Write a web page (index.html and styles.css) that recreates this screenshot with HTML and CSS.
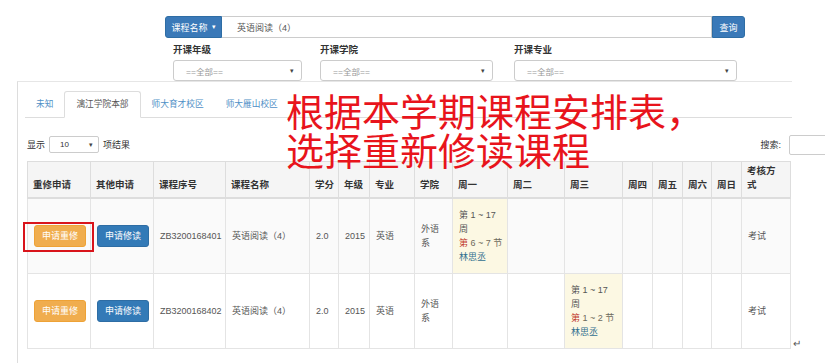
FILE: index.html
```html
<!DOCTYPE html>
<html>
<head>
<meta charset="utf-8">
<link rel="stylesheet" href="styles.css">
</head>
<body>
<div class="page">
  <div class="searchbar">
    <div class="sb-btn">课程名称 <span class="caret">▾</span></div>
    <div class="sb-input">英语阅读（4）</div>
    <div class="sb-go">查询</div>
  </div>
  <div class="filters">
    <div class="fgroup">
      <div class="flabel">开课年级</div>
      <div class="fselect w1"><span>==全部==</span><span class="arr">▾</span></div>
    </div>
    <div class="fgroup">
      <div class="flabel">开课学院</div>
      <div class="fselect w2"><span>==全部==</span><span class="arr">▾</span></div>
    </div>
    <div class="fgroup">
      <div class="flabel">开课专业</div>
      <div class="fselect w3"><span>==全部==</span><span class="arr">▾</span></div>
    </div>
  </div>
  <div class="panel">
    <ul class="tabs">
      <li class="tab">未知</li>
      <li class="tab active">漓江学院本部</li>
      <li class="tab">师大育才校区</li>
      <li class="tab">师大雁山校区</li>
    </ul>
    <div class="dt-top">
      <div class="len">显示 <span class="lensel"><span>10</span><span class="arr">▾</span></span> 项结果</div>
      <div class="srch">搜索:</div>
      <div class="srch-input"></div>
    </div>
    <table class="grid">
      <colgroup>
        <col style="width:63px"><col style="width:63px"><col style="width:72px"><col style="width:84px">
        <col style="width:29px"><col style="width:31px"><col style="width:45px"><col style="width:38px">
        <col style="width:55px"><col style="width:57px"><col style="width:58px"><col style="width:30px">
        <col style="width:30px"><col style="width:29px"><col style="width:30px"><col style="width:49px">
      </colgroup>
      <thead>
        <tr>
          <th>重修申请</th><th>其他申请</th><th>课程序号</th><th>课程名称</th><th>学分</th><th>年级</th><th>专业</th><th>学院</th>
          <th>周一</th><th>周二</th><th>周三</th><th>周四</th><th>周五</th><th>周六</th><th>周日</th><th>考核方<br>式</th>
        </tr>
      </thead>
      <tbody>
        <tr class="odd">
          <td><span class="mark"><span class="btn orange">申请重修</span></span></td>
          <td><span class="btn blue">申请修读</span></td>
          <td>ZB3200168401</td>
          <td>英语阅读（4）</td>
          <td>2.0</td>
          <td>2015</td>
          <td>英语</td>
          <td>外语系</td>
          <td class="sched"><div>第 1 ~ 17 周</div><div class="nw"><span class="red">第</span> 6 ~ 7 节</div><div class="teacher">林思丞</div></td>
          <td></td><td></td><td></td><td></td><td></td><td></td>
          <td>考试</td>
        </tr>
        <tr>
          <td><span class="btn orange">申请重修</span></td>
          <td><span class="btn blue">申请修读</span></td>
          <td>ZB3200168402</td>
          <td>英语阅读（4）</td>
          <td>2.0</td>
          <td>2015</td>
          <td>英语</td>
          <td>外语系</td>
          <td></td><td></td>
          <td class="sched"><div>第 1 ~ 17 周</div><div class="nw"><span class="red">第</span> 1 ~ 2 节</div><div class="teacher">林思丞</div></td>
          <td></td><td></td><td></td><td></td>
          <td>考试</td>
        </tr>
      </tbody>
    </table>
  </div>
  <div class="note">根据本学期课程安排表，<br>选择重新修读课程</div>
  <div class="ret">↵</div>
</div>
</body>
</html>
```

FILE: styles.css
```css
html, body {
  margin: 0;
  padding: 0;
  overflow: hidden;
  background: #fff;
}
body {
  font-family: "Liberation Sans", "Noto Sans CJK SC", sans-serif;
  font-size: 9px;
  color: #555;
}
.page {
  position: relative;
  width: 825px;
  height: 363px;
  padding-top: 16px;
  box-sizing: border-box;
  overflow: hidden;
}
.searchbar {
  display: flex;
  margin-left: 165px;
  width: 580px;
  height: 22px;
}
.sb-btn {
  width: 57px;
  background: #3a79b8;
  border: 1px solid #2e6da4;
  border-radius: 3px 0 0 3px;
  color: #fff;
  display: flex;
  align-items: center;
  justify-content: center;
  box-sizing: border-box;
}
.caret { font-size: 7px; margin-left: 4px; }
.sb-input {
  flex: 1;
  border: 1px solid #ccc;
  border-left: none;
  display: flex;
  align-items: center;
  padding-left: 15px;
  color: #555;
}
.sb-go {
  width: 33px;
  background: #3a79b8;
  border: 1px solid #2e6da4;
  border-radius: 0 3px 3px 0;
  color: #fff;
  display: flex;
  align-items: center;
  justify-content: center;
  box-sizing: border-box;
}
.filters {
  display: grid;
  grid-template-columns: 147px 194px 223px;
  margin-left: 173px;
  margin-top: 6px;
}
.flabel {
  font-weight: bold;
  color: #333;
  height: 12px;
  line-height: 12px;
  font-size: 9.5px;
}
.fselect {
  margin-top: 4px;
  height: 21px;
  border: 1px solid #ccc;
  border-radius: 3px;
  box-sizing: border-box;
  display: flex;
  align-items: center;
  justify-content: space-between;
  padding: 0 7px 0 12px;
  color: #999;
  font-size: 8.5px;
}
.fselect .arr { color: #444; font-size: 7px; }
.w1 { width: 129px; }
.w2 { width: 173px; }
.w3 { width: 223px; }
.panel {
  margin-left: 17px;
  width: 765px;
  border-left: 1px solid #ddd;
  border-top: 1px solid #e6e6e6;
  padding: 9px 0 0 9px;
  height: 280px;
}
.tabs {
  list-style: none;
  margin: 0 0 0 -2px;
  padding: 0;
  display: flex;
  border-bottom: 1px solid #ddd;
  height: 26px;
}
.tab {
  padding: 0 11px;
  height: 26px;
  line-height: 26px;
  color: #4f8fc6;
  font-size: 8.7px;
  box-sizing: border-box;
}
.tab.active {
  border: 1px solid #ddd;
  border-bottom-color: #fff;
  background: #fff;
  border-radius: 3px 3px 0 0;
  color: #555;
  height: 27px;
  line-height: 25px;
}
.dt-top {
  display: flex;
  align-items: center;
  margin-top: 18px;
  height: 17px;
  width: 764px;
}
.len {
  display: flex;
  align-items: center;
  color: #333;
}
.lensel {
  display: inline-flex;
  align-items: center;
  justify-content: space-between;
  width: 50px;
  height: 17px;
  border: 1px solid #ccc;
  border-radius: 2px;
  box-sizing: border-box;
  margin: 0 4px;
  padding: 0 5px 0 10px;
  font-size: 8px;
}
.lensel .arr { font-size: 7px; color: #444; }
.srch {
  margin-left: auto;
  margin-right: 8px;
  color: #333;
}
.srch-input {
  width: 120px;
  height: 18px;
  border: 1px solid #ccc;
  border-radius: 2px;
  margin-right: -120px;
}
.grid {
  margin-top: 8px;
  border-collapse: collapse;
  table-layout: fixed;
  width: 764px;
  border: 1px solid #ddd;
}
.grid th {
  background: #f5f5f5;
  color: #333;
  font-weight: bold;
  font-size: 9.5px;
  text-align: left;
  vertical-align: bottom;
  padding: 0 4px 5px 5px;
  height: 30px;
  line-height: 14px;
  border: 1px solid #ddd;
  border-bottom: 2px solid #ddd;
  white-space: nowrap;
}
.grid td {
  padding: 0 6px;
  height: 74px;
  border: 1px solid #e4e4e4;
  vertical-align: middle;
  line-height: 14px;
  color: #555;
}
.grid tr.odd td { background: #fafafa; }
.grid td.sched, .grid tr.odd td.sched { background: #fcf8e3; }
.nw { white-space: nowrap; color: #6d6a5c; }
.red { color: #c0392b; }
.teacher { color: #31708f; }
.btn {
  display: inline-block;
  width: 52px;
  height: 22px;
  line-height: 20px;
  box-sizing: border-box;
  text-align: center;
  color: #fff;
  border-radius: 3px;
  font-size: 9px;
}
.orange { background: #f0ad4e; border: 1px solid #eea236; }
.blue { background: #337ab7; border: 1px solid #2e6da4; }
.mark {
  position: relative;
  display: inline-block;
  vertical-align: middle;
}
.mark .btn { display: block; }
.mark::after {
  content: "";
  position: absolute;
  left: -11px;
  right: -8px;
  top: -3px;
  bottom: -5px;
  border: 2px solid #d9141b;
}
.note {
  position: absolute;
  left: 286px;
  top: 90px;
  font-family: "Noto Sans CJK SC", sans-serif;
  font-size: 38px;
  line-height: 39px;
  color: #e8141c;
  white-space: nowrap;
}
.ret {
  position: absolute;
  left: 793px;
  top: 338px;
  font-size: 10px;
  color: #555;
}
```
